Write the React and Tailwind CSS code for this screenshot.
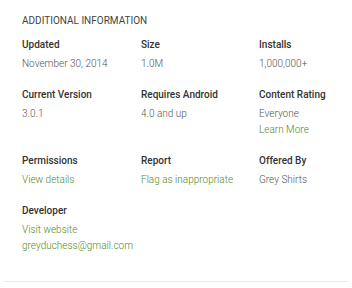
const rows = [
  [
    { label: 'Updated', values: [{ text: 'November 30, 2014' }] },
    { label: 'Size', values: [{ text: '1.0M' }] },
    { label: 'Installs', values: [{ text: '1,000,000+' }] },
  ],
  [
    { label: 'Current Version', values: [{ text: '3.0.1' }] },
    { label: 'Requires Android', values: [{ text: '4.0 and up' }] },
    { label: 'Content Rating', values: [{ text: 'Everyone' }, { text: 'Learn More', link: true }] },
  ],
  [
    { label: 'Permissions', values: [{ text: 'View details', link: true }] },
    { label: 'Report', values: [{ text: 'Flag as inappropriate', link: true }] },
    { label: 'Offered By', values: [{ text: 'Grey Shirts' }] },
  ],
  [
    {
      label: 'Developer',
      values: [
        { text: 'Visit website', link: true },
        { text: 'greyduchess@gmail.com', link: true },
      ],
    },
  ],
];

const Cell = ({ label, values }) => (
  <div className="flex flex-col">
    <div className="text-[10px] leading-4 font-medium text-[#333] mb-[3px]">{label}</div>
    {values.map((v) => (
      <div
        key={v.text}
        className={`text-[10px] leading-4 font-light ${v.link ? 'text-[#4f8a2b]' : 'text-[#555]'}`}
      >
        {v.text}
      </div>
    ))}
  </div>
);

export default function App() {
  return (
    <div className="w-[352px] h-[288px] bg-white overflow-hidden" style={{ fontFamily: 'Roboto, sans-serif' }}>
      <div className="px-[22px] pt-[13px]">
        <div className="text-[10px] leading-4 text-[#444]">ADDITIONAL INFORMATION</div>
        <div className="mt-[8px] flex flex-col gap-[15px]">
          {rows.map((row, i) => (
            <div key={i} className="grid grid-cols-[119px_118px_1fr]">
              {row.map((cell) => (
                <Cell key={cell.label} {...cell} />
              ))}
            </div>
          ))}
        </div>
      </div>
      <div className="mt-[27px] mx-[4px] border-t border-[#ebebeb]" />
    </div>
  );
}
